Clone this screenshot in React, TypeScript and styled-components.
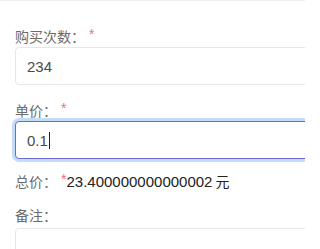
import React from "react";
import styled, { createGlobalStyle, css } from "styled-components";

const Global = createGlobalStyle`
  html, body {
    margin: 0;
    padding: 0;
    background: #ffffff;
    overflow: hidden;
  }
  body {
    font-family: "Liberation Sans", "Noto Sans CJK SC", sans-serif;
    font-size: 14px;
  }
`;

const Frame = styled.div`
  width: 305px;
  height: 249px;
  overflow: hidden;
`;

const Page = styled.div`
  border-top: 1px solid #eceef2;
  padding: 24px 0 0 15px;
  width: 420px;
`;

const Item = styled.div<{ $gap?: number }>`
  display: flex;
  flex-direction: column;
  margin-top: ${(p) => p.$gap ?? 0}px;
`;

const Label = styled.div`
  display: flex;
  align-items: center;
  height: 22px;
  line-height: 22px;
  color: #6b6b6b;
  font-family: "Noto Sans CJK SC", sans-serif;
  font-size: 14px;
`;

const Required = styled.span`
  color: #f56c7a;
  font-family: "Liberation Sans", sans-serif;
  font-size: 14px;
  margin-left: 4px;
  line-height: 22px;
  align-self: flex-start;
  position: relative;
  top: -2px;
`;

const Field = styled.div<{ $focused?: boolean; $offset?: number }>`
  box-sizing: border-box;
  display: flex;
  align-items: center;
  height: 38px;
  width: 400px;
  margin-top: ${(p) => p.$offset ?? 0}px;
  padding: 0 11px;
  border: 1px solid #e6e7eb;
  border-radius: 4px;
  background: #fff;
  color: #4a4a4a;
  font-family: "Liberation Sans", sans-serif;
  font-size: 15px;
  ${(p) =>
    p.$focused &&
    css`
      border-color: #6d6bd3;
      box-shadow: 0 0 0 3px #c4dcf8;
    `}
`;

const Caret = styled.span`
  display: inline-block;
  width: 1px;
  height: 17px;
  background: #222;
  margin-left: 1px;
`;

const TotalRow = styled.div<{ $gap?: number }>`
  display: flex;
  align-items: center;
  height: 22px;
  margin-top: ${(p) => p.$gap ?? 0}px;
`;

const TotalLabel = styled.span`
  color: #6b6b6b;
  font-family: "Noto Sans CJK SC", sans-serif;
  font-size: 14px;
`;

const Value = styled.span`
  color: #222;
  font-family: "Liberation Sans", "Noto Sans CJK SC", sans-serif;
  font-size: 15px;
`;

const Unit = styled.span`
  margin-left: 3px;
  font-family: "Noto Sans CJK SC", sans-serif;
  font-size: 14px;
  color: #222;
`;

const TextArea = styled.div`
  box-sizing: border-box;
  height: 60px;
  width: 400px;
  margin-top: 2px;
  border: 1px solid #e6e7eb;
  border-radius: 4px;
`;

export default function App() {
  return (
    <>
      <Global />
      <Frame>
        <Page>
          <Item>
            <Label>
              购买次数：<Required>*</Required>
            </Label>
            <Field>234</Field>
          </Item>
          <Item $gap={14}>
            <Label>
              单价：<Required>*</Required>
            </Label>
            <Field $focused>
              0.1
              <Caret />
            </Field>
          </Item>
          <TotalRow $gap={11}>
            <TotalLabel>总价：</TotalLabel>
            <Required>*</Required>
            <Value>23.400000000000002</Value>
            <Unit>元</Unit>
          </TotalRow>
          <Item $gap={12}>
            <Label>备注：</Label>
            <TextArea />
          </Item>
        </Page>
      </Frame>
    </>
  );
}
